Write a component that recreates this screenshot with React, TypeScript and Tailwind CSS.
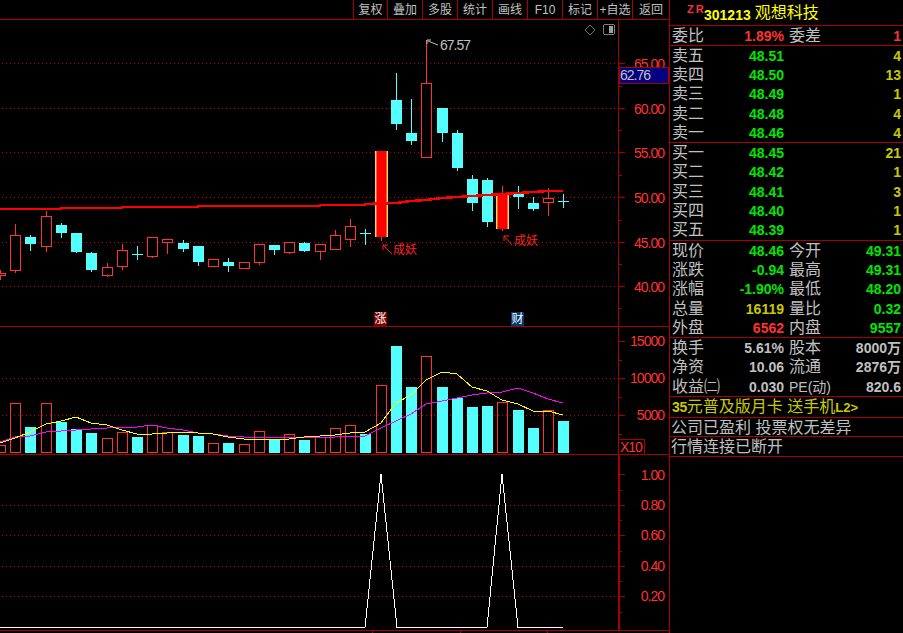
import React from 'react';

const RED_LINE = '#a80000';
const AXIS_RED = '#ff3232';
const CYAN = '#54ffff';
const FONT = '"Liberation Sans", "Noto Sans CJK SC", sans-serif';

// candle x positions, they are not quite even in the reference
const XS = [0, 15, 30, 46, 61, 76, 91, 107, 122, 137, 152, 167, 183, 198, 213, 228, 244, 259, 274, 289, 304, 320, 335, 350, 365, 381, 396, 411, 426, 442, 457, 472, 487, 502, 518, 533, 548, 563];

type Kind = 'up' | 'down' | 'cross' | 'solid';
// kind, body top, body bottom, wick top, wick bottom, volume bar top
const CANDLES: [Kind, number, number, number, number, number][] = [
  ['up', 273, 276, 270, 280, 445],
  ['up', 235, 271, 224, 273, 403],
  ['down', 237, 244, 235, 251, 427],
  ['up', 216, 247, 211, 252, 403],
  ['down', 225, 233, 223, 238, 422],
  ['down', 233, 252, 233, 253, 429],
  ['down', 253, 270, 252, 272, 433],
  ['up', 267, 276, 263, 277, 438],
  ['up', 250, 267, 244, 270, 432],
  ['cross', 254, 254, 246, 260, 437],
  ['up', 237, 257, 237, 258, 425],
  ['up', 239, 243, 239, 254, 432],
  ['down', 243, 249, 240, 252, 435],
  ['down', 246, 262, 246, 266, 436],
  ['up', 259, 267, 259, 267, 443],
  ['down', 262, 266, 258, 272, 443],
  ['up', 262, 269, 262, 269, 444],
  ['up', 244, 263, 244, 265, 431],
  ['down', 245, 250, 245, 255, 439],
  ['up', 242, 253, 242, 254, 434],
  ['down', 243, 251, 242, 252, 440],
  ['up', 244, 252, 244, 260, 437],
  ['up', 235, 250, 230, 250, 428],
  ['up', 226, 240, 219, 247, 425],
  ['cross', 233, 233, 229, 245, 434],
  ['solid', 151, 237, 151, 241, 385],
  ['down', 100, 124, 73, 130, 346],
  ['down', 133, 141, 99, 145, 387],
  ['up', 83, 158, 40, 158, 356],
  ['down', 108, 133, 108, 142, 387],
  ['down', 133, 168, 130, 171, 398],
  ['down', 179, 203, 175, 211, 407],
  ['down', 180, 222, 178, 227, 406],
  ['solid', 193, 229, 186, 231, 402],
  ['down', 193, 197, 186, 209, 410],
  ['down', 203, 209, 197, 211, 428],
  ['up', 198, 203, 188, 216, 410],
  ['cross', 201, 201, 194, 208, 421],
];

const MA_MAIN = '0,209 61,209 61,208 122,208 122,207 198,207 198,206 320,206 320,205 365,205 365,204 396,203 411,201 426,200 442,198 457,197 472,196 487,195 502,194 518,193 533,192 548,191 563,191';
const VOL_YELLOW = '0,443 15,438 30,432 46,424 61,421 76,417 91,423 107,425 122,430 137,434 152,434 167,433 183,432 198,433 213,434 228,437 244,439 259,439 274,440 289,439 304,437 320,436 335,435 350,433 365,432 381,423 396,403 411,395 426,380 442,372 457,374 472,387 487,391 502,400 518,404 533,411 548,411 563,415';
const VOL_MAGENTA = '0,442 15,437 30,436 46,432 61,431 76,430 91,429 107,428 122,427 137,427 152,425 167,428 183,430 198,433 213,434 228,436 244,437 259,437 274,437 289,437 304,438 320,437 335,437 350,436 365,436 381,428 396,421 411,414 426,404 442,401 457,398 472,395 487,393 502,392 518,388 533,393 548,399 563,403';

// one pixel every 4px, a stroke dash came out too faint
const Dotted = ({ y }: { y: number }) => {
  let d = '';
  for (let x = 2; x < 618; x += 4) d += `M${x} ${y}h1v1h-1z`;
  return <path d={d} fill="#d00000" />;
};

const AxisText = ({ y, children }: { y: number; children: string }) => (
  <text x={664} y={y + 5} textAnchor="end" fill={AXIS_RED} fontSize={14} letterSpacing={-1} fontFamily={FONT}>
    {children}
  </text>
);

const Tick = ({ y, minor = false }: { y: number; minor?: boolean }) => (
  <line x1={619} x2={minor ? 622 : 625} y1={y + 0.5} y2={y + 0.5} stroke={RED_LINE} />
);

const Candle = ({ i }: { i: number }) => {
  const [kind, top, bottom, wickTop, wickBottom] = CANDLES[i];
  const x = XS[i];
  if (kind === 'cross') {
    return (
      <g stroke={CYAN}>
        <line x1={x + 0.5} x2={x + 0.5} y1={wickTop} y2={wickBottom} />
        <line x1={x - 5} x2={x + 6} y1={top + 0.5} y2={top + 0.5} />
      </g>
    );
  }
  if (kind === 'solid') {
    return (
      <g>
        <line x1={x + 0.5} x2={x + 0.5} y1={wickTop} y2={wickBottom} stroke={AXIS_RED} />
        <rect x={x - 6} y={top} width={13} height={bottom - top} fill="#ffe040" />
        <rect x={x - 5} y={top} width={11} height={bottom - top} fill="#ff5a3c" />
        <rect x={x - 4} y={top} width={9} height={bottom - top} fill="#ff0000" />
      </g>
    );
  }
  if (kind === 'down') {
    return (
      <g>
        <line x1={x + 0.5} x2={x + 0.5} y1={wickTop} y2={wickBottom} stroke={CYAN} />
        <rect x={x - 5} y={top} width={11} height={bottom - top} fill={CYAN} />
      </g>
    );
  }
  return (
    <g>
      <line x1={x + 0.5} x2={x + 0.5} y1={wickTop} y2={top} stroke={AXIS_RED} />
      <line x1={x + 0.5} x2={x + 0.5} y1={bottom} y2={wickBottom} stroke={AXIS_RED} />
      <rect x={x - 4.5} y={top + 0.5} width={10} height={bottom - top - 1} fill="#000" stroke={AXIS_RED} />
    </g>
  );
};

const PriceChart = () => (
  <svg className="block shrink-0" width={670} height={306} viewBox="0 20 670 306" shapeRendering="crispEdges">
    {[63, 108, 152, 197, 242, 286].map((y) => (
      <Dotted key={y} y={y} />
    ))}
    {CANDLES.map((_, i) => (
      <Candle key={i} i={i} />
    ))}
    <polyline points={MA_MAIN} fill="none" stroke="#ff0000" strokeWidth={2.5} />

    {/* high mark */}
    <path d="M427 44V40H431M428 41L438 45" fill="none" stroke="#c0c0c0" shapeRendering="auto" />
    <text x={440} y={50} fill="#c0c0c0" fontSize={14} letterSpacing={-1} fontFamily={FONT}>67.57</text>

    {/* 成妖 signals */}
    <path d="M392 254L383 245M383 245V250M383 245H388" fill="none" stroke="#ff2020" shapeRendering="auto" />
    <text x={393} y={254} fill="#ff2020" fontSize={12} fontFamily={FONT}>成妖</text>
    <path d="M512 245L504 236M504 236V241M504 236H509" fill="none" stroke="#ff2020" shapeRendering="auto" />
    <text x={514} y={245} fill="#ff2020" fontSize={12} fontFamily={FONT}>成妖</text>

    {/* top right pane icons */}
    <path d="M590 25L595 30L590 35L585 30Z" fill="none" stroke="#707070" shapeRendering="auto" />
    <rect x={603.5} y={24.5} width={11} height={10} rx={2} fill="#000" stroke="#808080" />
    <rect x={609} y={26} width={4} height={7} fill="#a0a0a0" />

    {/* badges */}
    <rect x={374} y={312} width={13} height={14} fill="#800000" />
    <text x={380.5} y={323} textAnchor="middle" fill="#fff" fontSize={12} fontFamily={FONT}>涨</text>
    <rect x={511} y={312} width={13} height={14} fill="#003a70" />
    <text x={517.5} y={323} textAnchor="middle" fill="#fff" fontSize={12} fontFamily={FONT}>财</text>

    {/* axis */}
    <line x1={618.5} x2={618.5} y1={20} y2={326} stroke={RED_LINE} />
    {[63, 108, 152, 197, 242, 286].map((y) => (
      <Tick key={y} y={y} />
    ))}
    {[86, 130, 175, 220, 264, 308].map((y) => (
      <Tick key={y} y={y} minor />
    ))}
    <AxisText y={64}>65.00</AxisText>
    <AxisText y={109}>60.00</AxisText>
    <AxisText y={153}>55.00</AxisText>
    <AxisText y={198}>50.00</AxisText>
    <AxisText y={243}>45.00</AxisText>
    <AxisText y={287}>40.00</AxisText>
    <rect x={619.5} y={67.5} width={49} height={16} fill="#000080" stroke={RED_LINE} />
    <text x={620} y={80} fill="#c0c0c0" fontSize={14} letterSpacing={-1} fontFamily={FONT}>62.76</text>
  </svg>
);

const VolumeChart = () => (
  <svg className="block shrink-0" width={670} height={127} viewBox="0 327 670 127" shapeRendering="crispEdges">
    <Dotted y={378} />
    <Dotted y={415} />
    {CANDLES.map(([kind, , , , , volTop], i) => {
      const x = XS[i];
      return kind === 'up' || kind === 'solid' ? (
        <rect key={i} x={x - 4.5} y={volTop + 0.5} width={10} height={453 - volTop - 1} fill="none" stroke={AXIS_RED} />
      ) : (
        <rect key={i} x={x - 5} y={volTop} width={11} height={453 - volTop} fill={CYAN} />
      );
    })}
    <polyline points={VOL_MAGENTA} fill="none" stroke="#ff00ff" />
    <polyline points={VOL_YELLOW} fill="none" stroke="#ffff00" />

    <line x1={618.5} x2={618.5} y1={327} y2={454} stroke={RED_LINE} />
    {[341, 378, 415].map((y) => (
      <Tick key={y} y={y} />
    ))}
    {[360, 397, 434].map((y) => (
      <Tick key={y} y={y} minor />
    ))}
    <AxisText y={341}>15000</AxisText>
    <AxisText y={378}>10000</AxisText>
    <AxisText y={415}>5000</AxisText>
    <rect x={618.5} y={439.5} width={26} height={15} fill="#000" stroke={RED_LINE} />
    <text x={620} y={452} fill={AXIS_RED} fontSize={14} letterSpacing={-1} fontFamily={FONT}>X10</text>
  </svg>
);

const SignalChart = () => (
  <svg className="block shrink-0" width={670} height={178} viewBox="0 455 670 178" shapeRendering="crispEdges">
    {[505, 535, 566, 596].map((y) => (
      <Dotted key={y} y={y} />
    ))}
    <polyline
      points="0,627.5 365,627.5 381,474 397,627.5 487,627.5 502,474 518,627.5 563,627.5"
      fill="none"
      stroke="#fff"
    />
    <line x1={619} x2={619} y1={455} y2={630} stroke={RED_LINE} strokeWidth={2} />
    {[474, 505, 535, 566, 596].map((y) => (
      <Tick key={y} y={y} />
    ))}
    {[490, 520, 551, 581, 612].map((y) => (
      <Tick key={y} y={y} minor />
    ))}
    <AxisText y={475}>1.00</AxisText>
    <AxisText y={505}>0.80</AxisText>
    <AxisText y={535}>0.60</AxisText>
    <AxisText y={566}>0.40</AxisText>
    <AxisText y={596}>0.20</AxisText>
    <line x1={0} x2={670} y1={630.5} y2={630.5} stroke={RED_LINE} />
    {[372, 460, 547].map((x) => (
      <line key={x} x1={x + 0.5} x2={x + 0.5} y1={631} y2={633} stroke={RED_LINE} />
    ))}
  </svg>
);

const TOOLS: [string, string][] = [
  ['复权', 'w-[34px]'],
  ['叠加', 'w-[35px]'],
  ['多股', 'w-[35px]'],
  ['统计', 'w-[35px]'],
  ['画线', 'w-[35px]'],
  ['F10', 'w-[35px]'],
  ['标记', 'w-[35px]'],
  ['+自选', 'w-[35px]'],
  ['返回', 'w-[37px]'],
];

const LABEL = 'text-[16px] leading-none text-[#c0c0c0]';
const NUM = 'text-[14px] font-bold leading-none';
const GREEN = 'text-[#00e600]';
const YELLOW = 'text-[#c8c800]';
const PINK = 'text-[#ff3232]';
const GRAY = 'text-[#c0c0c0]';

const Book = ({ rows }: { rows: [string, string, string][] }) => (
  <div className="flex flex-col border-b border-[#a80000]">
    {rows.map(([label, price, qty]) => (
      <div key={label} className="flex h-[19.3px] items-center px-[2px]">
        <span className={`${LABEL} w-[32px]`}>{label}</span>
        <span className={`${NUM} ${GREEN} w-[80px] text-right`}>{price}</span>
        <span className={`${NUM} ${YELLOW} flex-1 text-right`}>{qty}</span>
      </div>
    ))}
  </div>
);

type Stat = [string, string, string, React.ReactNode, string, string];

const Stats = ({ rows }: { rows: Stat[] }) => (
  <div className="flex flex-col border-b border-[#a80000]">
    {rows.map(([l1, v1, c1, l2, v2, c2]) => (
      <div key={l1} className="flex h-[19.3px] items-center px-[2px]">
        <span className={`${LABEL} w-[40px] whitespace-nowrap`}>{l1}</span>
        <span className={`${NUM} ${c1} w-[72px] whitespace-nowrap text-right`}>{v1}</span>
        <span className={`${LABEL} ml-[5px] w-[42px] whitespace-nowrap`}>{l2}</span>
        <span className={`${NUM} ${c2} flex-1 whitespace-nowrap text-right`}>{v2}</span>
      </div>
    ))}
  </div>
);

const QuotePanel = () => (
  <div className="flex w-[233px] shrink-0 flex-col">
    <div className="flex h-[26px] shrink-0 items-start border-b border-[#a80000] pt-[4px]">
      <span className="ml-[17px] w-[17px] text-[11px] font-bold leading-none tracking-[2px] text-[#ff3232]">ZR</span>
      <span className="mt-[4px] text-[14px] font-bold leading-none text-[#ffff00]">301213</span>
      <span className="ml-[4px] mt-[1px] text-[16px] leading-none text-[#ffff00]">观想科技</span>
    </div>
    <div className="flex h-[20px] items-center border-b border-[#a80000] px-[2px]">
      <span className={`${LABEL} w-[32px]`}>委比</span>
      <span className={`${NUM} ${PINK} w-[80px] text-right`}>1.89%</span>
      <span className={`${LABEL} ml-[5px] w-[42px]`}>委差</span>
      <span className={`${NUM} ${PINK} flex-1 text-right`}>1</span>
    </div>
    <Book
      rows={[
        ['卖五', '48.51', '4'],
        ['卖四', '48.50', '13'],
        ['卖三', '48.49', '1'],
        ['卖二', '48.48', '4'],
        ['卖一', '48.46', '4'],
      ]}
    />
    <Book
      rows={[
        ['买一', '48.45', '21'],
        ['买二', '48.42', '1'],
        ['买三', '48.41', '3'],
        ['买四', '48.40', '1'],
        ['买五', '48.39', '1'],
      ]}
    />
    <Stats
      rows={[
        ['现价', '48.46', GREEN, '今开', '49.31', GREEN],
        ['涨跌', '-0.94', GREEN, '最高', '49.31', GREEN],
        ['涨幅', '-1.90%', GREEN, '最低', '48.20', GREEN],
        ['总量', '16119', YELLOW, '量比', '0.32', GREEN],
        ['外盘', '6562', PINK, '内盘', '9557', GREEN],
      ]}
    />
    <Stats
      rows={[
        ['换手', '5.61%', GRAY, '股本', '8000万', GRAY],
        ['净资', '10.06', GRAY, '流通', '2876万', GRAY],
        ['收益㈡', '0.030', GRAY, <span className="text-[14px]">PE(动)</span>, '820.6', GRAY],
      ]}
    />
    <div className="flex h-[21px] items-center whitespace-nowrap border-b border-[#a80000] pl-[2px] text-[16px] leading-none text-[#c8c800]">
      <b className="text-[14px] tracking-[-0.4px]">35</b>元普及版月卡 送手机<b className="text-[13px]">L2&gt;</b>
    </div>
    <div className="flex h-[19px] items-center border-b border-[#a80000] pl-[1px] pt-[1px] text-[16px] leading-none text-[#c0c0c0]">
      公司已盈利 投票权无差异
    </div>
    <div className="flex h-[20px] items-center border-b border-[#a80000] pl-[1px] text-[16px] leading-none text-[#c0c0c0]">
      行情连接已断开
    </div>
  </div>
);

export default function App() {
  return (
    <div className="flex h-[633px] w-[903px] overflow-hidden bg-black" style={{ fontFamily: FONT }}>
      <div className="flex w-[670px] shrink-0 flex-col border-r border-[#a80000]">
        <div className="flex h-[20px] shrink-0 justify-end border-b border-[#a80000]">
          {TOOLS.map(([t, w]) => (
            <div key={t} className={`flex ${w} items-center justify-center border-l border-[#a80000] text-[12px] leading-none whitespace-nowrap text-[#c0c0c0]`}>
              {t}
            </div>
          ))}
        </div>
        <div className="shrink-0 border-b border-[#a80000]">
          <PriceChart />
        </div>
        <div className="shrink-0 border-b border-[#a80000]">
          <VolumeChart />
        </div>
        <SignalChart />
      </div>
      <QuotePanel />
    </div>
  );
}
